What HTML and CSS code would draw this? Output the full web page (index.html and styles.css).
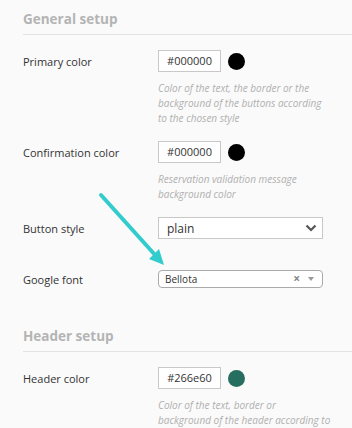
FILE: index.html
```html
<!DOCTYPE html>
<html>
<head>
<meta charset="utf-8">
<link rel="stylesheet" href="styles.css">
</head>
<body>
<div class="page">
  <section class="section">
    <h2 class="section-title">General setup</h2>
    <div class="field with-help">
      <div class="row">
        <label class="label">Primary color</label>
        <div class="color-input">#000000</div>
        <span class="swatch swatch-black"></span>
      </div>
      <p class="help">Color of the text, the border or the background of the buttons according to the chosen style</p>
    </div>
    <div class="field with-help">
      <div class="row">
        <label class="label">Confirmation color</label>
        <div class="color-input">#000000</div>
        <span class="swatch swatch-black"></span>
      </div>
      <p class="help">Reservation validation message background color</p>
    </div>
    <div class="field">
      <div class="row">
        <label class="label">Button style</label>
        <div class="select">
          <span class="select-value">plain</span>
          <svg class="chevron" width="12" height="8" viewBox="0 0 12 8"><polyline points="1.5,1.5 6,6 10.5,1.5" fill="none" stroke="#555" stroke-width="2.2"/></svg>
        </div>
      </div>
    </div>
    <div class="field">
      <div class="row">
        <label class="label">Google font</label>
        <div class="select2">
          <span class="select2-value">Bellota</span>
          <span class="select2-clear">×</span>
          <span class="select2-caret"></span>
        </div>
      </div>
    </div>
  </section>
  <section class="section section-second">
    <h2 class="section-title">Header setup</h2>
    <div class="field with-help">
      <div class="row">
        <label class="label">Header color</label>
        <div class="color-input">#266e60</div>
        <span class="swatch swatch-green"></span>
      </div>
      <p class="help">Color of the text, border or background of the header according to the chosen style</p>
    </div>
  </section>
  <svg class="arrow" width="352" height="428" viewBox="0 0 352 428">
    <line x1="101" y1="195" x2="156" y2="256" stroke="#33cccc" stroke-width="4" stroke-linecap="round"/>
    <polygon points="164,265 149,259 159,249" fill="#33cccc"/>
  </svg>
</div>
</body>
</html>
```
FILE: styles.css
```css
* { box-sizing: border-box; }
html, body { margin: 0; padding: 0; }
body {
  background: #fafafa;
  font-family: "Open Sans", "Noto Sans", sans-serif;
  color: #333;
  width: 352px;
  height: 428px;
  overflow: hidden;
}
.page { position: relative; }
.section {
  padding-left: 23px;
  padding-top: 8px;
}
.section-second { padding-top: 6px; }
.section-title {
  margin: 0 0 15px 0;
  font-size: 13.5px;
  font-weight: 700;
  color: #b4b4b4;
  line-height: 22px;
  padding-bottom: 4px;
  border-bottom: 1px solid #e3e3e3;
}
.field { margin-bottom: 31px; }
.field.with-help { margin-bottom: 15px; }
.row {
  display: flex;
  align-items: center;
}
.label {
  width: 135px;
  font-size: 11px;
  color: #333;
}
.color-input {
  width: 63px;
  height: 22px;
  border: 1px solid #c8c8c8;
  background: #fff;
  font-size: 11px;
  line-height: 20px;
  text-align: center;
  color: #333;
}
.swatch {
  width: 17px;
  height: 17px;
  border-radius: 50%;
  margin-left: 7px;
}
.swatch-black { background: #000; }
.swatch-green { background: #266e60; }
.help {
  margin: 9px 0 0 135px;
  width: 173px;
  font-size: 10px;
  line-height: 15px;
  font-style: italic;
  color: #b0b0b0;
}
.select {
  width: 165px;
  height: 22px;
  border: 1px solid #c8c8c8;
  background: #fff;
  display: flex;
  align-items: center;
  justify-content: space-between;
  padding: 0 5px 0 8px;
}
.select-value { font-size: 12px; color: #333; }
.select2 {
  width: 165px;
  height: 18px;
  border: 1px solid #aaa;
  border-radius: 4px;
  background: #fff;
  display: flex;
  align-items: center;
  padding: 0 8px 0 6px;
}
.select2-value { font-size: 10px; color: #333; flex: 1; }
.select2-clear { font-size: 12px; color: #888; font-weight: 700; line-height: 1; margin-right: 8px; }
.select2-caret {
  width: 0; height: 0;
  border-left: 3.5px solid transparent;
  border-right: 3.5px solid transparent;
  border-top: 4px solid #999;
}
.arrow {
  position: absolute;
  left: 0;
  top: 0;
  pointer-events: none;
}
```
